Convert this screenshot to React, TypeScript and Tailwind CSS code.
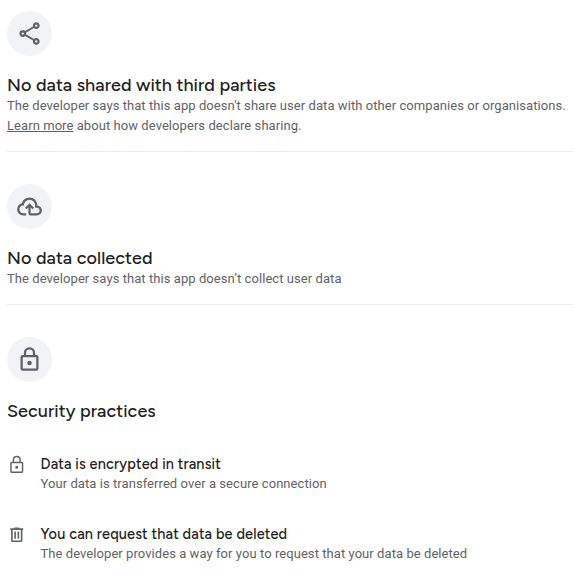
import type { ReactNode } from 'react'

const SHARE =
  'M18 22q-1.25 0-2.125-.875T15 19q0-.175.025-.363t.075-.337l-7.05-4.1q-.425.375-.95.588T6 15q-1.25 0-2.125-.875T3 12t.875-2.125T6 9q.575 0 1.1.213t.95.587l7.05-4.1q-.05-.15-.075-.337T15 5q0-1.25.875-2.125T18 2t2.125.875T21 5t-.875 2.125T18 8q-.575 0-1.1-.212t-.95-.588L8.9 11.3q.05.15.075.338T9 12t-.025.363-.075.337l7.05 4.1q.425-.375.95-.587T18 16q1.25 0 2.125.875T21 19t-.875 2.125T18 22m0-2q.425 0 .713-.287T19 19t-.287-.712T18 18t-.712.288T17 19t.288.713T18 20M6 13q.425 0 .713-.288T7 12t-.288-.712T6 11t-.712.288T5 12t.288.713T6 13m12-7q.425 0 .713-.288T19 5t-.288-.712T18 4t-.712.288T17 5t.288.713T18 6'
const CLOUD =
  'M6.5 20q-2.28 0-3.89-1.57Q1 16.85 1 14.58q0-1.95 1.17-3.48 1.18-1.53 3.08-1.95.63-2.3 2.5-3.72Q9.63 4 12 4q2.93 0 4.96 2.04Q19 8.07 19 11q1.73.2 2.86 1.5Q23 13.78 23 15.5q0 1.88-1.31 3.19T18.5 20H13q-.82 0-1.41-.59Q11 18.83 11 18v-5.15L9.4 14.4 8 13l4-4 4 4-1.4 1.4-1.6-1.55V18h5.5q1.05 0 1.77-.73.73-.72.73-1.77t-.73-1.77Q19.55 13 18.5 13H17v-2q0-2.07-1.46-3.54Q14.08 6 12 6 9.93 6 8.46 7.46 7 8.93 7 11h-.5q-1.45 0-2.47 1.03Q3 13.05 3 14.5q0 1.45 1.03 2.5 1.02 1 2.47 1H9v2z'
const LOCK =
  'M18 8h-1V6A5 5 0 0 0 7 6v2H6a2 2 0 0 0-2 2v10a2 2 0 0 0 2 2h12a2 2 0 0 0 2-2V10a2 2 0 0 0-2-2ZM9 6a3 3 0 0 1 6 0v2H9V6Zm9 14H6V10h12v10Zm-6-3a2 2 0 1 0 0-4 2 2 0 0 0 0 4Z'
const LOCK_SMALL =
  'M18.3 8.3H17V6A5 5 0 0 0 7 6v2.3H5.7A1.7 1.7 0 0 0 4 10v10.3A1.7 1.7 0 0 0 5.7 22h12.6a1.7 1.7 0 0 0 1.7-1.7V10a1.7 1.7 0 0 0-1.7-1.7ZM8.8 6a3.2 3.2 0 0 1 6.4 0v2.3H8.8V6Zm9.4 14.2H5.8V10.1h12.4v10.1ZM12 17a1.85 1.85 0 1 0 0-3.7 1.85 1.85 0 0 0 0 3.7Z'
const TRASH =
  'M15 4V3H9v1H4v2h1v13a2 2 0 0 0 2 2h10a2 2 0 0 0 2-2V6h1V4h-5Zm2 15H7V6h10v13ZM9 8h2v9H9V8Zm4 0h2v9h-2V8Z'

function Icon({ d, className }: { d: string; className: string }) {
  return (
    <svg viewBox="0 0 24 24" fill="currentColor" fillRule="evenodd" className={className}>
      <path d={d} />
    </svg>
  )
}

function Section({ icon, title, children }: { icon: string; title: string; children?: ReactNode }) {
  return (
    <section>
      <div className="flex size-[45px] items-center justify-center rounded-full bg-[#f1f3f4]">
        <Icon d={icon} className="size-[27px] text-[#5f6368]" />
      </div>
      <h2 className="mt-[17px] -mb-px font-['Figtree','Lato',sans-serif] text-[18px] leading-6 font-medium text-[#202124]">
        {title}
      </h2>
      {children}
    </section>
  )
}

function Practice({ icon, title, text }: { icon: string; title: string; text: string }) {
  return (
    <li className="flex gap-3.5">
      <Icon d={icon} className="mt-[0.5px] size-[19.5px] shrink-0 text-[#5f6368]" />
      <div>
        <h3 className="font-['Figtree','Lato',sans-serif] text-[14.5px] leading-5 font-medium tracking-[0.16px] text-[#202124]">
          {title}
        </h3>
        <p className="leading-[19px]">{text}</p>
      </div>
    </li>
  )
}

export default function App() {
  return (
    <main className="h-[588px] bg-white pt-[11px] pl-[7px] font-['Roboto',sans-serif] text-[13px] leading-5 tracking-[0.065px] text-[#5f6368]">
      <Section icon={SHARE} title="No data shared with third parties">
        <p className="whitespace-nowrap">
          The developer says that this app doesn't share user data with other companies or organisations.
        </p>
        <p>
          <a className="underline">Learn more</a> about how developers declare sharing.
        </p>
      </Section>
      <hr className="mt-[15px] mb-8 border-[#e8eaed]" />
      <Section icon={CLOUD} title="No data collected">
        <p>The developer says that this app doesn’t collect user data</p>
      </Section>
      <hr className="mt-[15px] mb-8 border-[#e8eaed]" />
      <Section icon={LOCK} title="Security practices" />
      <ul className="mt-8 flex flex-col gap-[31px]">
        <Practice icon={LOCK_SMALL} title="Data is encrypted in transit" text="Your data is transferred over a secure connection" />
        <Practice
          icon={TRASH}
          title="You can request that data be deleted"
          text="The developer provides a way for you to request that your data be deleted"
        />
      </ul>
    </main>
  )
}
